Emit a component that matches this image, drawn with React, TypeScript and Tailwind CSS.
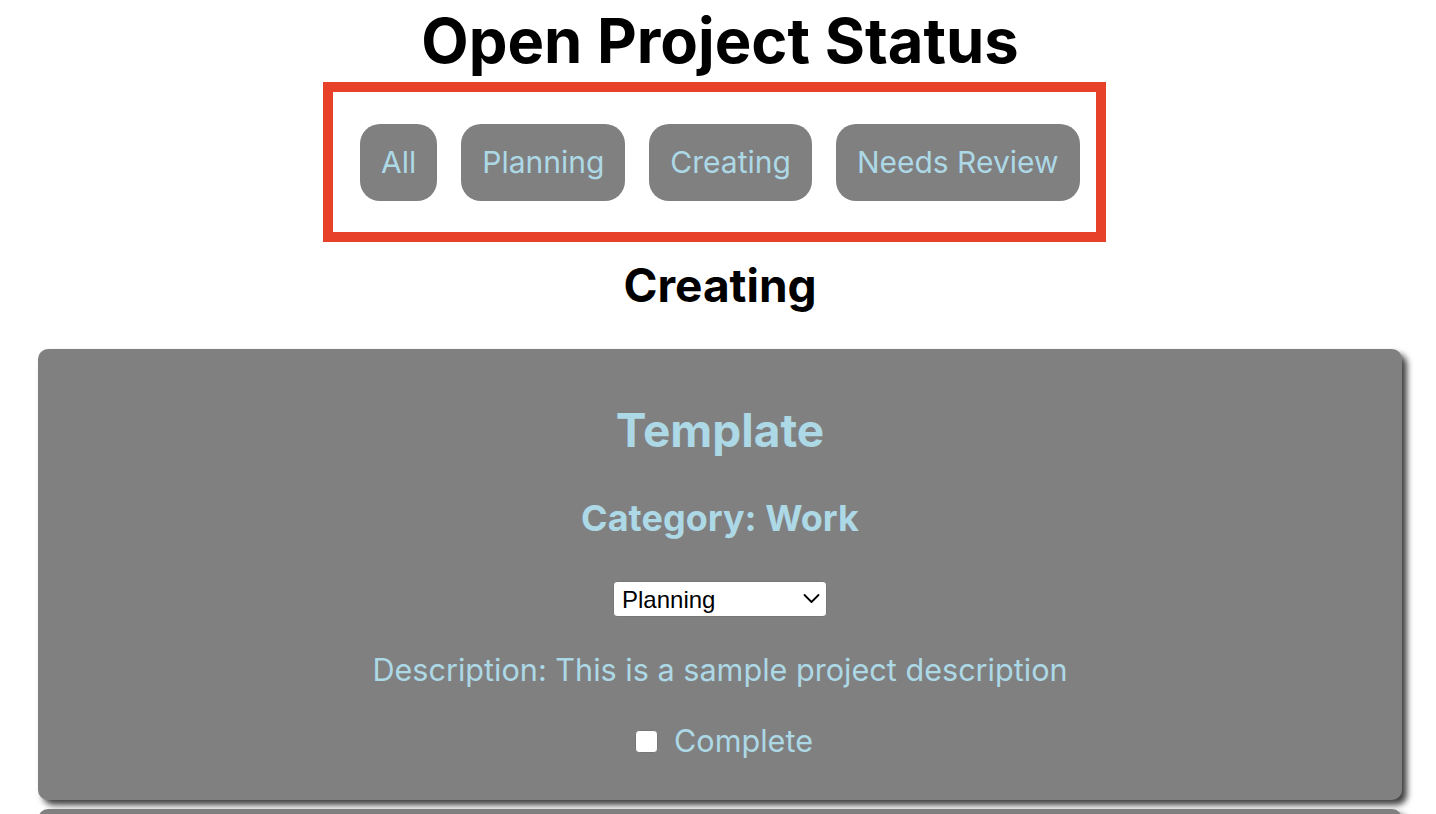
import { useState } from 'react';

const FILTERS = ['All', 'Planning', 'Creating', 'Needs Review'];

interface Project {
  name: string;
  category: string;
  status: string;
  description: string;
}

const PROJECTS: Project[] = [
  { name: 'Template', category: 'Work', status: 'Planning', description: 'This is a sample project description' },
  { name: 'Second', category: 'Home', status: 'Creating', description: 'Another project' },
];

function ProjectCard({ project }: { project: Project }) {
  const [done, setDone] = useState(false);
  return (
    <div className="ml-[38px] mr-[34px] mb-[9px] bg-[#808080] rounded-[10px] shadow-[5px_5px_6px_rgba(0,0,0,0.75)] flex flex-col items-center pt-[53px] pb-[38px] text-[#add8e6]">
      <h2 className="text-[46px] font-bold leading-[56px]">{project.name}</h2>
      <h3 className="mt-[38px] text-[36px] font-bold leading-[44px]">Category: {project.category}</h3>
      <div className="relative mt-[41px]">
        <select
          defaultValue={project.status}
          className="appearance-none w-[214px] h-[36px] bg-white text-black text-[24px] rounded-[4px] border border-[#767676] pl-[8px] font-['Liberation_Sans',sans-serif]"
        >
          <option>Planning</option>
          <option>Creating</option>
          <option>Needs Review</option>
        </select>
        <svg
          className="pointer-events-none absolute right-[7px] top-[12px]"
          width="17"
          height="11"
          viewBox="0 0 17 11"
          fill="none"
          stroke="black"
          strokeWidth="1.8"
          strokeLinecap="round"
          strokeLinejoin="round"
        >
          <path d="M1.5 2 L8.5 9 L15.5 2" />
        </svg>
      </div>
      <p className="mt-[32px] text-[30.6px] leading-[42px]">Description: {project.description}</p>
      <label className="mt-[29px] flex items-center gap-[10px] text-[30.6px] leading-[42px]">
        <input
          type="checkbox"
          checked={done}
          onChange={() => setDone(!done)}
          className="ml-[8px] mr-[6px] w-[23px] h-[23px] appearance-none bg-white rounded-[4px] border border-[#767676]"
        />
        Complete
      </label>
    </div>
  );
}

export default function App() {
  const [filter, setFilter] = useState('Creating');
  return (
    <div className="min-h-screen bg-white font-['Inter',sans-serif]">
      <h1 className="pl-[4px] text-center text-[61.5px] font-bold leading-[82px] text-black">Open Project Status</h1>
      <div className="flex justify-center pr-[7px]">
        <div className="w-[783px] border-[10px] border-[#e8412a] flex gap-[24px] pl-[27px] pt-[32px] pb-[31px]">
          {FILTERS.map((f) => (
            <button
              key={f}
              onClick={() => setFilter(f)}
              className="h-[77px] px-[21px] rounded-[20px] bg-[#808080] text-[#add8e6] text-[30px]"
            >
              {f}
            </button>
          ))}
        </div>
      </div>
      <h2 className="pl-[4px] text-center text-[46px] font-bold leading-[56px] mt-[15px] mb-[36px] text-black">{filter}</h2>
      {PROJECTS.map((p) => (
        <ProjectCard key={p.name} project={p} />
      ))}
    </div>
  );
}
